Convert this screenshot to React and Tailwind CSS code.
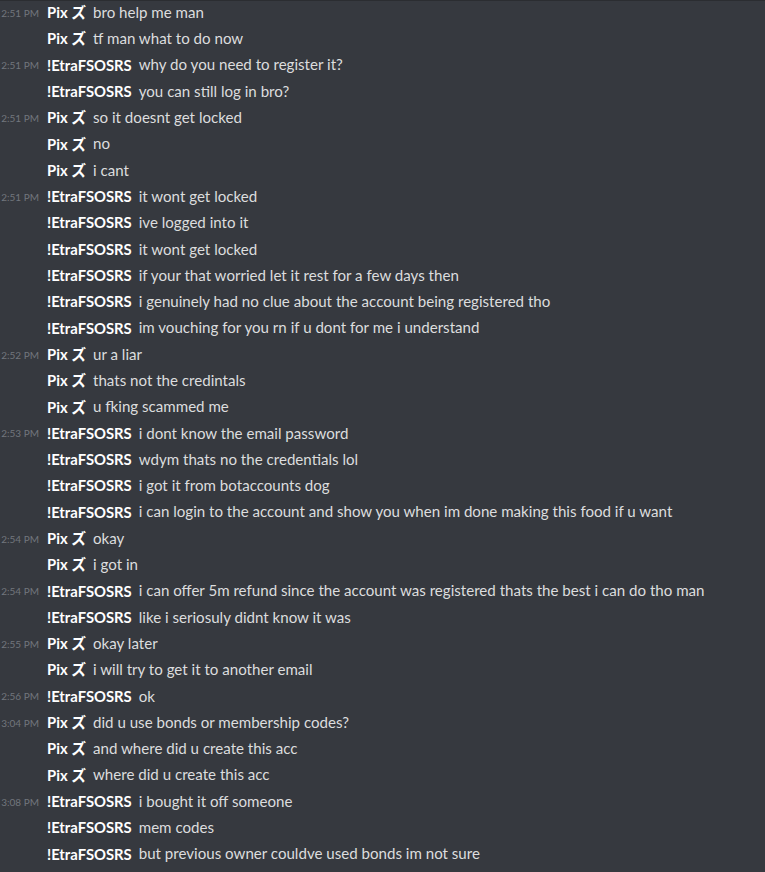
import React from "react";

const PIX = "Pix ズ";
const ETRA = "!EtraFSOSRS";

const messages = [
  ["2:51 PM", PIX, "bro help me man"],
  [null, PIX, "tf man what to do now"],
  ["2:51 PM", ETRA, "why do you need to register it?"],
  [null, ETRA, "you can still log in bro?"],
  ["2:51 PM", PIX, "so it doesnt get locked"],
  [null, PIX, "no"],
  [null, PIX, "i cant"],
  ["2:51 PM", ETRA, "it wont get locked"],
  [null, ETRA, "ive logged into it"],
  [null, ETRA, "it wont get locked"],
  [null, ETRA, "if your that worried let it rest for a few days then"],
  [null, ETRA, "i genuinely had no clue about the account being registered tho"],
  [null, ETRA, "im vouching for you rn if u dont for me i understand"],
  ["2:52 PM", PIX, "ur a liar"],
  [null, PIX, "thats not the credintals"],
  [null, PIX, "u fking scammed me"],
  ["2:53 PM", ETRA, "i dont know the email password"],
  [null, ETRA, "wdym thats no the credentials lol"],
  [null, ETRA, "i got it from botaccounts dog"],
  [null, ETRA, "i can login to the account and show you when im done making this food if u want"],
  ["2:54 PM", PIX, "okay"],
  [null, PIX, "i got in"],
  ["2:54 PM", ETRA, "i can offer 5m refund since the account was registered thats the best i can do tho man"],
  [null, ETRA, "like i seriosuly didnt know it was"],
  ["2:55 PM", PIX, "okay later"],
  [null, PIX, "i will try to get it to another email"],
  ["2:56 PM", ETRA, "ok"],
  ["3:04 PM", PIX, "did u use bonds or membership codes?"],
  [null, PIX, "and where did u create this acc"],
  [null, PIX, "where did u create this acc"],
  ["3:08 PM", ETRA, "i bought it off someone"],
  [null, ETRA, "mem codes"],
  [null, ETRA, "but previous owner couldve used bonds im not sure"],
];

export default function App() {
  return (
    <div
      className="w-[765px] h-[872px] overflow-hidden bg-[#36393f] border-t border-[#2b2d31]"
      style={{ fontFamily: '"Lato", "Noto Sans CJK JP", sans-serif' }}
    >
      <div className="-mt-[2px]">
        {messages.map(([time, name, text], i) => (
          <div key={i} className="flex items-center h-[26.3px] whitespace-nowrap">
            <div className="w-[39px] shrink-0 flex justify-end overflow-visible">
              {time && (
                <span className="text-[10px] text-[#72767d] pt-[2px]">{time}</span>
              )}
            </div>
            <span className="ml-[8px] text-[14.8px] font-bold text-white">{name}</span>
            <span className="ml-[7px] text-[15.1px] text-[#dcddde]">{text}</span>
          </div>
        ))}
      </div>
    </div>
  );
}
